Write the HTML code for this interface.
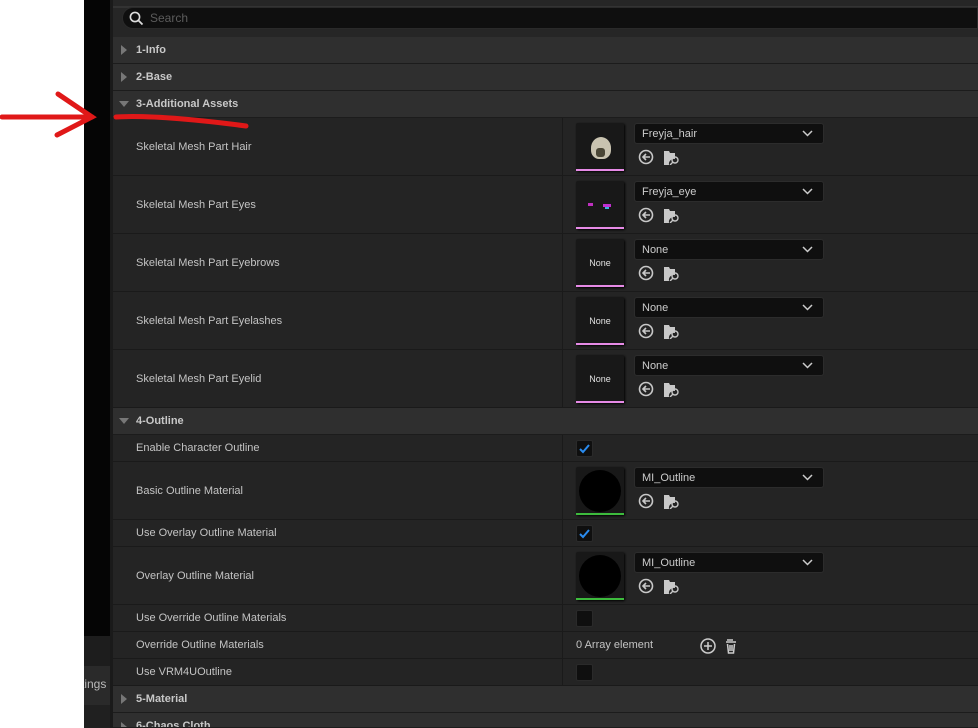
<!DOCTYPE html>
<html style="overflow:hidden;width:978px;height:728px"><head><style>
*{margin:0;padding:0;box-sizing:border-box}
body{width:978px;height:728px;overflow:hidden;background:#fff;font-family:"Liberation Sans",sans-serif;position:relative}
.a{position:absolute}
.hdr{position:absolute;left:113px;right:0;background:#2f2f2f;border-bottom:1px solid #1c1c1c;color:#c8c8c8;font-weight:bold;font-size:11px}
.hdr span{position:absolute;left:23px;top:50%;transform:translateY(-50%)}
.tri{position:absolute;left:8px;top:50%;transform:translateY(-50%);width:0;height:0;border-top:5px solid transparent;border-bottom:5px solid transparent;border-left:6px solid #777}
.tri.d{border-left:5px solid transparent;border-right:5px solid transparent;border-top:6px solid #777;border-bottom:0;left:6px}
.row{position:absolute;left:113px;right:0;background:#242424;border-bottom:1px solid #1a1a1a;color:#c4c4c4;font-size:11px}
.row .l{position:absolute;left:23px;top:50%;transform:translateY(-50%)}
.row .sep{position:absolute;left:449px;top:0;bottom:0;width:1px;background:#1a1a1a}
.th{position:absolute;left:463px;top:5px;width:48px;height:48px;background:#181818;border-radius:2px;box-shadow:1px 1px 2px #000}
.th .bar{position:absolute;left:0;right:0;bottom:0;height:2px;background:#e68ae6}
.th .bar.g{background:#3dbb3d}
.th .none{position:absolute;width:100%;top:19px;text-align:center;color:#e0e0e0;font-size:9px}
.combo{position:absolute;left:521px;top:5px;width:190px;height:21px;background:#0f0f0f;border:1px solid #2c2c2c;border-radius:3px;color:#ccc;font-size:11px;padding:4px 0 0 7px}
.combo svg{position:absolute;right:10px;top:6px}
.ic{position:absolute;left:525px;top:31px}
.cb{position:absolute;left:463px;top:5px;width:17px;height:17px;background:#0f0f0f;border:1px solid #2a2a2a;border-radius:2px}
</style></head><body>
<div class="a" style="left:84px;top:0;width:26px;height:636px;background:#050505"></div>
<div class="a" style="left:84px;top:636px;width:26px;height:30px;background:#1d1d1d"></div>
<div class="a" style="left:84px;top:666px;width:26px;height:39px;background:#2a2a2a;color:#bbb;font-size:12px;overflow:hidden"><span style="position:absolute;left:-3px;top:11px">tings</span></div>
<div class="a" style="left:84px;top:705px;width:26px;height:23px;background:#202020"></div>
<div class="a" style="left:110px;top:0;width:3px;height:728px;background:#1a1a1a"></div>
<div class="a" style="left:113px;top:0;right:0;height:37px;background:#262626"></div>
<div class="a" style="left:113px;top:6px;right:0;height:2px;background:#333"></div>
<div class="a" style="left:122px;top:7px;right:0;height:22px;background:#0f0f0f;border:1px solid #2a2a2a;border-radius:11px 0 0 11px;color:#5c5c5c;font-size:12px;padding:3px 0 0 27px">Search
<svg class="a" style="left:6px;top:3px" width="15" height="15" viewBox="0 0 15 15"><circle cx="6" cy="6" r="4.6" fill="none" stroke="#ddd" stroke-width="1.6"/><path d="M9.5 9.5L13.5 13.5" stroke="#ddd" stroke-width="1.8"/></svg></div>

<div class="hdr" style="top:37px;height:27px"><i class="tri"></i><span>1-Info</span></div>
<div class="hdr" style="top:64px;height:27px"><i class="tri"></i><span>2-Base</span></div>
<div class="hdr" style="top:91px;height:27px"><i class="tri d"></i><span>3-Additional Assets</span></div>

<div class="row" style="top:118px;height:58px"><span class="l">Skeletal Mesh Part Hair</span><i class="sep"></i>
<div class="th"><div class="a" style="left:15px;top:14px;width:20px;height:22px;border-radius:50% 50% 40% 40%;background:#c9c3b0"></div><div class="a" style="left:20px;top:25px;width:9px;height:9px;background:#4a4636;border-radius:3px"></div><i class="bar"></i></div>
<div class="combo">Freyja_hair<svg width="11" height="7"><path d="M1 1l4.5 4.5L10 1" stroke="#ccc" stroke-width="1.5" fill="none"/></svg></div>
<svg class="ic" width="44" height="16" viewBox="0 0 44 16"><circle cx="8" cy="8" r="6.5" fill="none" stroke="#c8c8c8" stroke-width="1.6"/><path d="M12 8H5M8 5L5 8l3 3" stroke="#c8c8c8" stroke-width="1.6" fill="none"/><path d="M26 2h5l1 2h5v6a5 5 0 0 0-6 6h-5z" fill="#c8c8c8"/><circle cx="37" cy="11" r="3" fill="none" stroke="#c8c8c8" stroke-width="1.4"/><path d="M35 13l-3 3" stroke="#c8c8c8" stroke-width="1.4"/></svg></div>

<div class="row" style="top:176px;height:58px"><span class="l">Skeletal Mesh Part Eyes</span><i class="sep"></i>
<div class="th"><div class="a" style="left:12px;top:22px;width:5px;height:3px;background:#c030c0"></div><div class="a" style="left:27px;top:23px;width:8px;height:3px;background:#c030d0"></div><div class="a" style="left:29px;top:26px;width:4px;height:2px;background:#3ab0e0"></div><i class="bar"></i></div>
<div class="combo">Freyja_eye<svg width="11" height="7"><path d="M1 1l4.5 4.5L10 1" stroke="#ccc" stroke-width="1.5" fill="none"/></svg></div>
<svg class="ic" width="44" height="16" viewBox="0 0 44 16"><circle cx="8" cy="8" r="6.5" fill="none" stroke="#c8c8c8" stroke-width="1.6"/><path d="M12 8H5M8 5L5 8l3 3" stroke="#c8c8c8" stroke-width="1.6" fill="none"/><path d="M26 2h5l1 2h5v6a5 5 0 0 0-6 6h-5z" fill="#c8c8c8"/><circle cx="37" cy="11" r="3" fill="none" stroke="#c8c8c8" stroke-width="1.4"/><path d="M35 13l-3 3" stroke="#c8c8c8" stroke-width="1.4"/></svg></div>

<div class="row" style="top:234px;height:58px"><span class="l">Skeletal Mesh Part Eyebrows</span><i class="sep"></i>
<div class="th"><div class="none">None</div><i class="bar"></i></div>
<div class="combo">None<svg width="11" height="7"><path d="M1 1l4.5 4.5L10 1" stroke="#ccc" stroke-width="1.5" fill="none"/></svg></div>
<svg class="ic" width="44" height="16" viewBox="0 0 44 16"><circle cx="8" cy="8" r="6.5" fill="none" stroke="#c8c8c8" stroke-width="1.6"/><path d="M12 8H5M8 5L5 8l3 3" stroke="#c8c8c8" stroke-width="1.6" fill="none"/><path d="M26 2h5l1 2h5v6a5 5 0 0 0-6 6h-5z" fill="#c8c8c8"/><circle cx="37" cy="11" r="3" fill="none" stroke="#c8c8c8" stroke-width="1.4"/><path d="M35 13l-3 3" stroke="#c8c8c8" stroke-width="1.4"/></svg></div>

<div class="row" style="top:292px;height:58px"><span class="l">Skeletal Mesh Part Eyelashes</span><i class="sep"></i>
<div class="th"><div class="none">None</div><i class="bar"></i></div>
<div class="combo">None<svg width="11" height="7"><path d="M1 1l4.5 4.5L10 1" stroke="#ccc" stroke-width="1.5" fill="none"/></svg></div>
<svg class="ic" width="44" height="16" viewBox="0 0 44 16"><circle cx="8" cy="8" r="6.5" fill="none" stroke="#c8c8c8" stroke-width="1.6"/><path d="M12 8H5M8 5L5 8l3 3" stroke="#c8c8c8" stroke-width="1.6" fill="none"/><path d="M26 2h5l1 2h5v6a5 5 0 0 0-6 6h-5z" fill="#c8c8c8"/><circle cx="37" cy="11" r="3" fill="none" stroke="#c8c8c8" stroke-width="1.4"/><path d="M35 13l-3 3" stroke="#c8c8c8" stroke-width="1.4"/></svg></div>

<div class="row" style="top:350px;height:58px"><span class="l">Skeletal Mesh Part Eyelid</span><i class="sep"></i>
<div class="th"><div class="none">None</div><i class="bar"></i></div>
<div class="combo">None<svg width="11" height="7"><path d="M1 1l4.5 4.5L10 1" stroke="#ccc" stroke-width="1.5" fill="none"/></svg></div>
<svg class="ic" width="44" height="16" viewBox="0 0 44 16"><circle cx="8" cy="8" r="6.5" fill="none" stroke="#c8c8c8" stroke-width="1.6"/><path d="M12 8H5M8 5L5 8l3 3" stroke="#c8c8c8" stroke-width="1.6" fill="none"/><path d="M26 2h5l1 2h5v6a5 5 0 0 0-6 6h-5z" fill="#c8c8c8"/><circle cx="37" cy="11" r="3" fill="none" stroke="#c8c8c8" stroke-width="1.4"/><path d="M35 13l-3 3" stroke="#c8c8c8" stroke-width="1.4"/></svg></div>

<div class="hdr" style="top:408px;height:27px"><i class="tri d"></i><span>4-Outline</span></div>

<div class="row" style="top:435px;height:27px"><span class="l">Enable Character Outline</span><i class="sep"></i><div class="cb"><svg width="15" height="15"><path d="M3 8l3 3 6-7" stroke="#2a8cf0" stroke-width="2" fill="none"/></svg></div></div>

<div class="row" style="top:462px;height:58px"><span class="l">Basic Outline Material</span><i class="sep"></i>
<div class="th"><div class="a" style="left:3px;top:3px;width:42px;height:42px;border-radius:50%;background:#000"></div><i class="bar g"></i></div>
<div class="combo">MI_Outline<svg width="11" height="7"><path d="M1 1l4.5 4.5L10 1" stroke="#ccc" stroke-width="1.5" fill="none"/></svg></div>
<svg class="ic" width="44" height="16" viewBox="0 0 44 16"><circle cx="8" cy="8" r="6.5" fill="none" stroke="#c8c8c8" stroke-width="1.6"/><path d="M12 8H5M8 5L5 8l3 3" stroke="#c8c8c8" stroke-width="1.6" fill="none"/><path d="M26 2h5l1 2h5v6a5 5 0 0 0-6 6h-5z" fill="#c8c8c8"/><circle cx="37" cy="11" r="3" fill="none" stroke="#c8c8c8" stroke-width="1.4"/><path d="M35 13l-3 3" stroke="#c8c8c8" stroke-width="1.4"/></svg></div>

<div class="row" style="top:520px;height:27px"><span class="l">Use Overlay Outline Material</span><i class="sep"></i><div class="cb"><svg width="15" height="15"><path d="M3 8l3 3 6-7" stroke="#2a8cf0" stroke-width="2" fill="none"/></svg></div></div>

<div class="row" style="top:547px;height:58px"><span class="l">Overlay Outline Material</span><i class="sep"></i>
<div class="th"><div class="a" style="left:3px;top:3px;width:42px;height:42px;border-radius:50%;background:#000"></div><i class="bar g"></i></div>
<div class="combo">MI_Outline<svg width="11" height="7"><path d="M1 1l4.5 4.5L10 1" stroke="#ccc" stroke-width="1.5" fill="none"/></svg></div>
<svg class="ic" width="44" height="16" viewBox="0 0 44 16"><circle cx="8" cy="8" r="6.5" fill="none" stroke="#c8c8c8" stroke-width="1.6"/><path d="M12 8H5M8 5L5 8l3 3" stroke="#c8c8c8" stroke-width="1.6" fill="none"/><path d="M26 2h5l1 2h5v6a5 5 0 0 0-6 6h-5z" fill="#c8c8c8"/><circle cx="37" cy="11" r="3" fill="none" stroke="#c8c8c8" stroke-width="1.4"/><path d="M35 13l-3 3" stroke="#c8c8c8" stroke-width="1.4"/></svg></div>

<div class="row" style="top:605px;height:27px"><span class="l">Use Override Outline Materials</span><i class="sep"></i><div class="cb"></div></div>
<div class="row" style="top:632px;height:27px"><span class="l">Override Outline Materials</span><i class="sep"></i><span class="a" style="left:463px;top:7px">0 Array element</span>
<svg class="a" style="left:586px;top:5px" width="40" height="18" viewBox="0 0 40 18"><circle cx="9" cy="9" r="7" fill="none" stroke="#ccc" stroke-width="1.5"/><path d="M9 5v8M5 9h8" stroke="#ccc" stroke-width="1.5"/><path d="M28 3h6M27 5h10M28.5 7l1 9h5l1-9M31 8v6M33 8v6" stroke="#ccc" stroke-width="1.5" fill="none"/></svg></div>
<div class="row" style="top:659px;height:27px"><span class="l">Use VRM4UOutline</span><i class="sep"></i><div class="cb"></div></div>

<div class="hdr" style="top:686px;height:27px"><i class="tri"></i><span>5-Material</span></div>
<div class="hdr" style="top:713px;height:15px;overflow:hidden"><i class="tri" style="top:14px"></i><span style="top:13px">6-Chaos Cloth</span></div>

<svg class="a" style="left:0;top:0" width="260" height="140"><g stroke="#e01818" stroke-width="5" fill="none" stroke-linecap="round"><path d="M2 117H92"/><path d="M58 94L92 117L57 135"/><path d="M116 117C150 115 200 120 246 126"/></g></svg>
</body></html>
